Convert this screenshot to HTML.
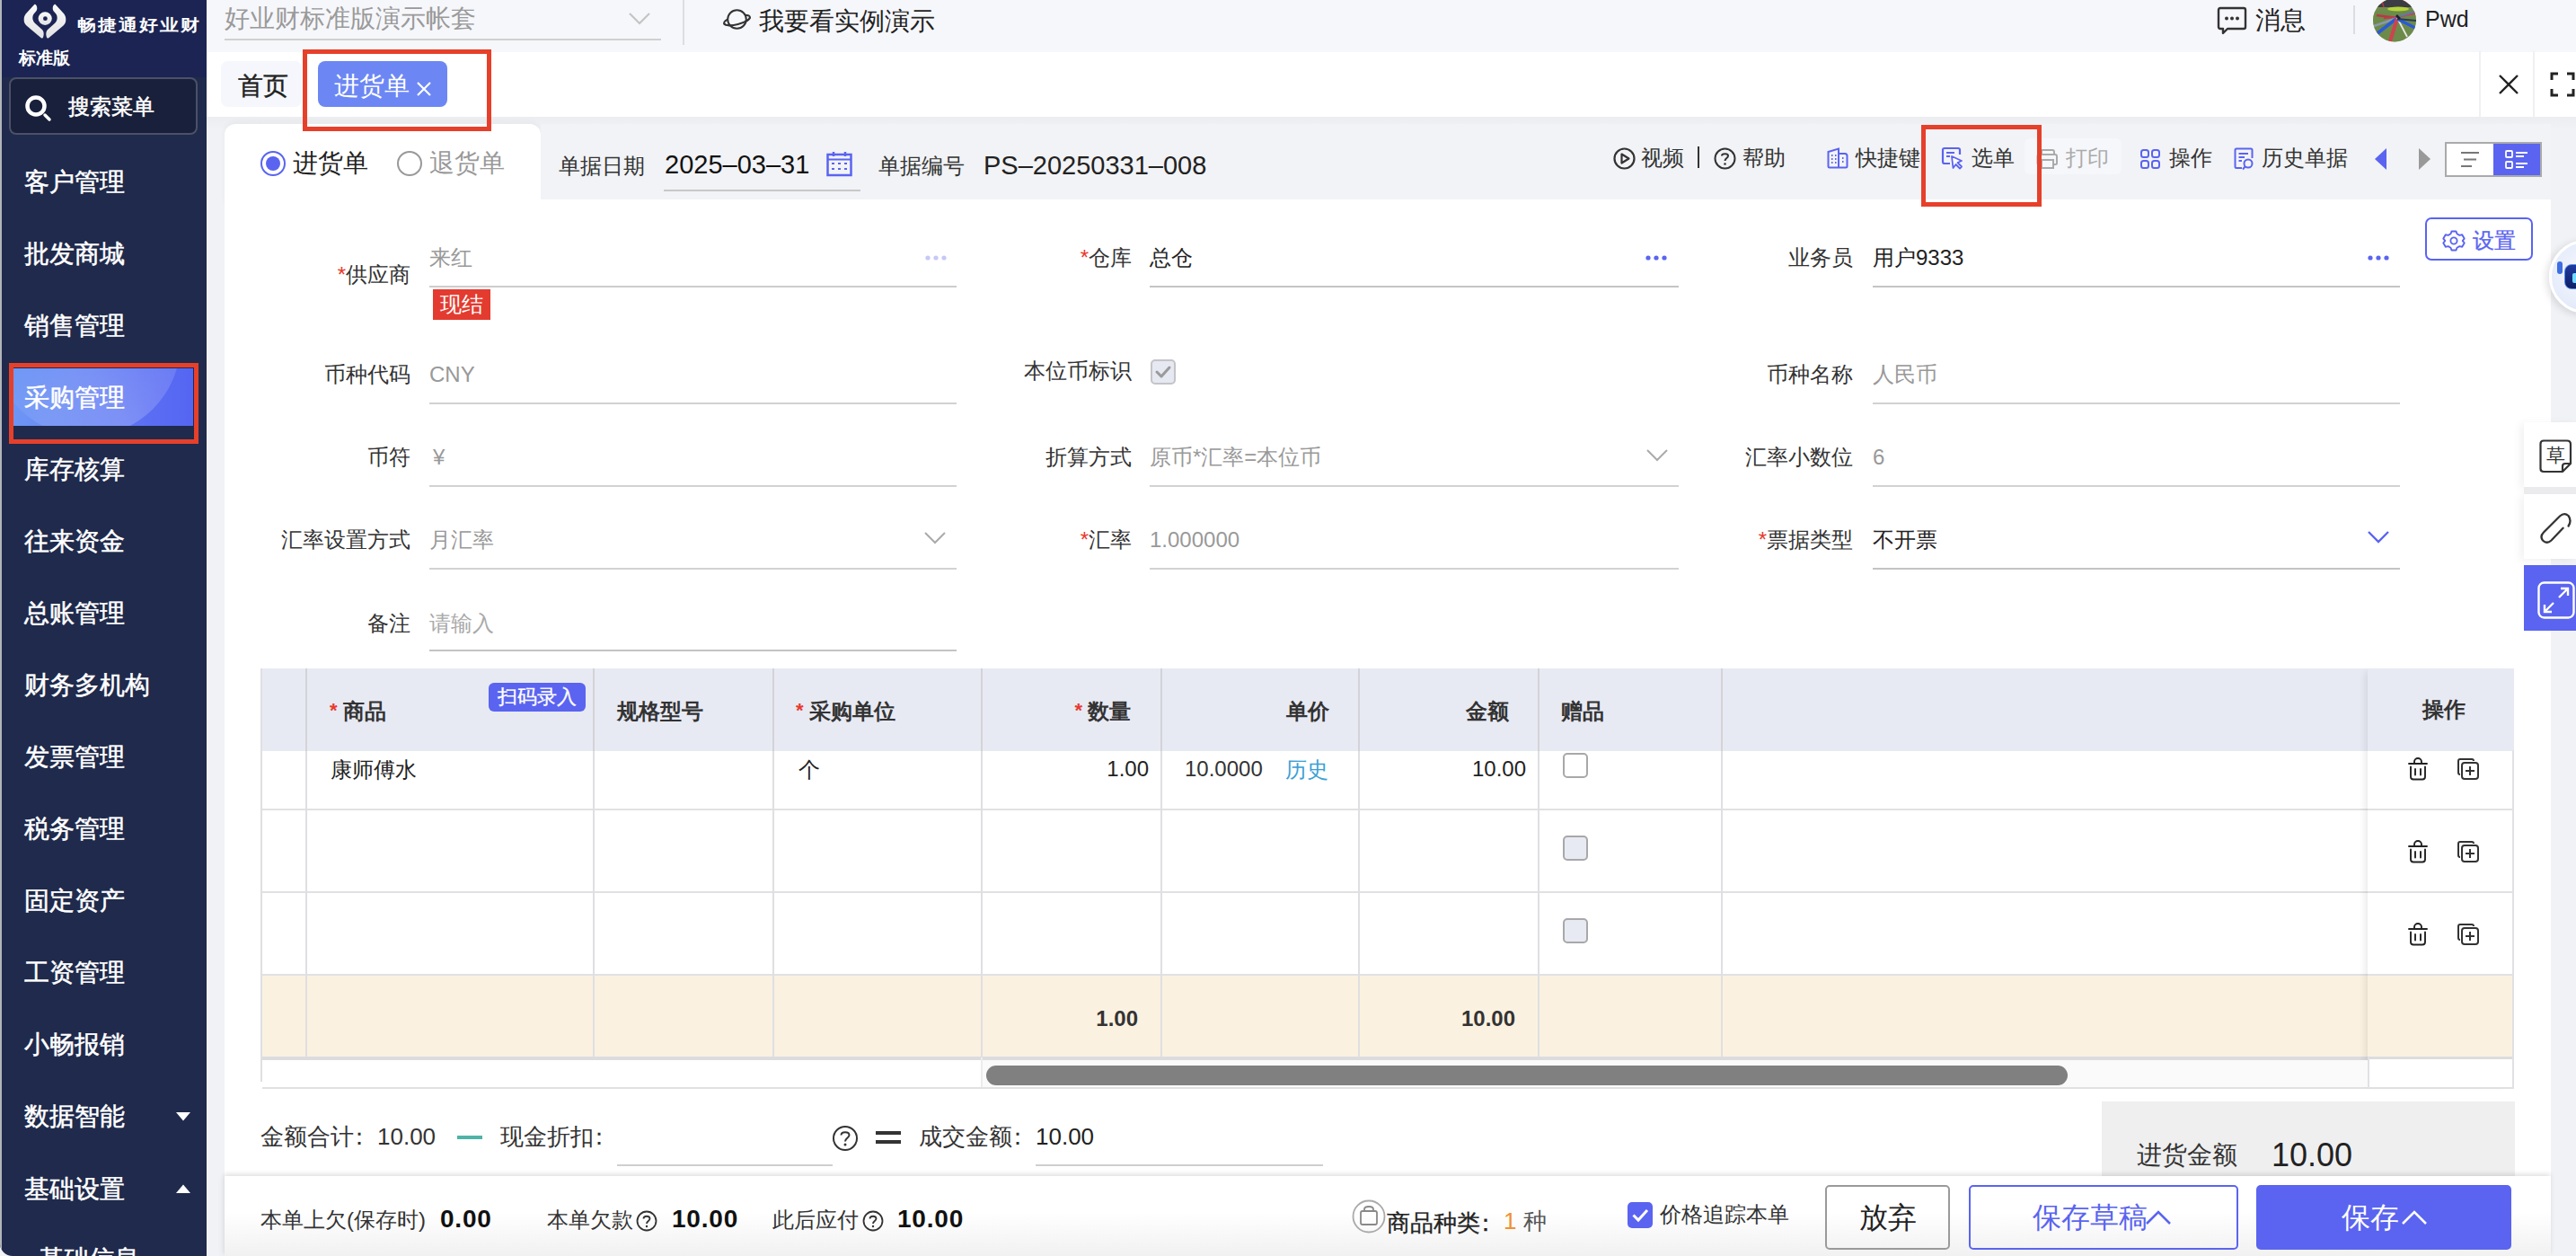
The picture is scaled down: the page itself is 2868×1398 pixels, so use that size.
<!DOCTYPE html>
<html><head><meta charset="utf-8">
<style>
*{box-sizing:border-box;margin:0;padding:0}
html,body{width:2868px;height:1398px;overflow:hidden;background:#f1f2f5;font-family:"Liberation Sans",sans-serif;color:#333}
.a{position:absolute;white-space:nowrap}
#side{position:absolute;left:0;top:0;width:230px;height:1398px;background:#1f2a4c;border-bottom-left-radius:14px;overflow:hidden}
#side .lb{position:absolute;left:0;top:0;width:2px;height:100%;background:#b4b5ba}
#side .logo{position:absolute;left:2px;top:0;width:228px;height:86px;background:#1b2453}
.mi{position:absolute;left:27px;font-size:27.5px;color:#fff;line-height:40px;-webkit-text-stroke:0.5px #fff}
.rb{position:absolute;border:5px solid #e6402b;z-index:20}
.med{-webkit-text-stroke:0.4px currentColor}
#hdr{position:absolute;left:230px;top:0;width:2638px;height:58px;background:#f6f7fb}
#tabs{position:absolute;left:230px;top:58px;width:2638px;height:72px;background:#fff}
.lbl{position:absolute;font-size:24px;color:#333;line-height:34px;text-align:right;white-space:nowrap}
.req{color:#e8392e}
.inp{position:absolute;height:2px;background:#d3d3d3}
.val{position:absolute;font-size:24px;line-height:34px;white-space:nowrap}
.gray{color:#999}
</style></head><body>

<!-- SIDEBAR -->
<div id="side">
  <div class="lb"></div>
  <div class="logo"></div>
  <svg class="a" style="left:20px;top:0px" width="60" height="50" viewBox="0 0 60 50">
    <defs><linearGradient id="lg" x1="0" y1="0" x2="0" y2="1"><stop offset="0" stop-color="#fafafa"/><stop offset="1" stop-color="#e2e2e4"/></linearGradient></defs>
    <path id="lp" d="M18.5 4.8 C19.5 4.5 21.5 6.5 21.3 9.5 C21.2 11.5 20 13 18.5 14.5 C16.5 16.5 16 19 16.5 21.5 C17 24 18.5 25.5 20.5 27.3 L27 33 C29 35 29 38.5 28.2 41 C27.8 42.5 26.8 43 25.8 42.3 L9.5 28.5 C7 26.3 6.6 24 6.7 21 C6.8 18 8 16 10 14 Z" fill="url(#lg)"/>
    <path d="M18.5 4.8 C19.5 4.5 21.5 6.5 21.3 9.5 C21.2 11.5 20 13 18.5 14.5 C16.5 16.5 16 19 16.5 21.5 C17 24 18.5 25.5 20.5 27.3 L27 33 C29 35 29 38.5 28.2 41 C27.8 42.5 26.8 43 25.8 42.3 L9.5 28.5 C7 26.3 6.6 24 6.7 21 C6.8 18 8 16 10 14 Z" fill="url(#lg)" transform="translate(60,0) scale(-1,1)"/>
    <ellipse cx="30.2" cy="20.6" rx="7.6" ry="7.3" fill="url(#lg)"/>
    <circle cx="30.4" cy="20.7" r="2.4" fill="#1b2453"/>
  </svg>
  <div class="a" style="left:86px;top:14px;font-size:21px;line-height:28px;color:#fff;font-weight:700;letter-spacing:2px;transform:scaleY(0.86);transform-origin:0 50%">畅捷通好业财</div>
  <div class="a" style="left:21px;top:52px;font-size:19px;line-height:26px;color:#fff;font-weight:700">标准版</div>
  <div class="a" style="left:10px;top:86px;width:210px;height:64px;background:#19203b;border:2px solid #4b5266;border-radius:8px"></div>
  <svg class="a" style="left:28px;top:106px" width="30" height="30" viewBox="0 0 30 30"><circle cx="12" cy="12" r="9.5" fill="none" stroke="#fff" stroke-width="4.5"/><path d="M22 22 L27 27" stroke="#fff" stroke-width="3.5" stroke-linecap="round"/></svg>
  <div class="a" style="left:76px;top:102px;font-size:24px;line-height:34px;color:#fff;-webkit-text-stroke:0.5px #fff">搜索菜单</div>
  <div class="mi" style="top:183px">客户管理</div>
  <div class="mi" style="top:263px">批发商城</div>
  <div class="mi" style="top:343px">销售管理</div>
  <div class="a" style="left:15px;top:410px;width:200px;height:64px;background:linear-gradient(90deg,#6d96f5 0%,#6480f4 45%,#5a6ef3 75%,#5565f2 100%);overflow:hidden"><div style="position:absolute;left:-24px;top:-134px;width:210px;height:210px;border-radius:50%;background:radial-gradient(circle at 72% 96%,rgba(255,255,255,0.2) 0%,rgba(255,255,255,0.12) 35%,rgba(255,255,255,0) 62%)"></div></div>
  <div class="mi" style="top:423px">采购管理</div>
  <div class="rb" style="left:10px;top:404px;width:211px;height:90px"></div>
  <div class="mi" style="top:503px">库存核算</div>
  <div class="mi" style="top:583px">往来资金</div>
  <div class="mi" style="top:663px">总账管理</div>
  <div class="mi" style="top:743px">财务多机构</div>
  <div class="mi" style="top:823px">发票管理</div>
  <div class="mi" style="top:903px">税务管理</div>
  <div class="mi" style="top:983px">固定资产</div>
  <div class="mi" style="top:1063px">工资管理</div>
  <div class="mi" style="top:1143px">小畅报销</div>
  <div class="mi" style="top:1223px">数据智能</div>
  <svg class="a" style="left:196px;top:1238px" width="16" height="10"><path d="M0 0 L16 0 L8 9.5Z" fill="#fff"/></svg>
  <div class="mi" style="top:1304px">基础设置</div>
  <svg class="a" style="left:196px;top:1318px" width="16" height="10"><path d="M0 10 L16 10 L8 0.5Z" fill="#fff"/></svg>
  <div class="mi" style="top:1382px;left:43px">基础信息</div>
</div>
</div>

<!-- HEADER -->
<div id="hdr"></div>
<div class="a" style="left:250px;top:2px;font-size:28px;line-height:38px;color:#9a9a9a">好业财标准版演示帐套</div>
<svg class="a" style="left:699px;top:13px" width="26" height="16"><path d="M2 2 L13 13 L24 2" fill="none" stroke="#c4c4c4" stroke-width="2.2"/></svg>
<div class="a" style="left:250px;top:43px;width:486px;height:2px;background:#d0d0d0"></div>
<div class="a" style="left:760px;top:0;width:2px;height:50px;background:#dcdde2"></div>
<svg class="a" style="left:803px;top:6px" width="36" height="30" viewBox="0 0 36 30"><defs><clipPath id="pfront"><rect x="-5" y="16.5" width="50" height="20" transform="rotate(-14 17.5 16.5)"/></clipPath></defs>
<ellipse cx="17.5" cy="16.5" rx="14.8" ry="4.6" transform="rotate(-14 17.5 16.5)" fill="none" stroke="#333" stroke-width="2"/>
<circle cx="17.5" cy="15.5" r="10.3" fill="#f6f7fb" stroke="#333" stroke-width="2"/>
<g clip-path="url(#pfront)"><ellipse cx="17.5" cy="16.5" rx="14.8" ry="4.6" transform="rotate(-14 17.5 16.5)" fill="none" stroke="#333" stroke-width="2"/></g></svg>
<div class="a" style="left:845px;top:5px;font-size:28px;line-height:38px;color:#222">我要看实例演示</div>
<svg class="a" style="left:2468px;top:6px" width="34" height="34" viewBox="0 0 34 34"><path d="M4 3 H30 Q32 3 32 5 V24 Q32 26 30 26 H12 L7 31 V26 H4 Q2 26 2 24 V5 Q2 3 4 3Z" fill="none" stroke="#333" stroke-width="2.4" stroke-linejoin="round"/><circle cx="11" cy="14.5" r="2" fill="#333"/><circle cx="17" cy="14.5" r="2" fill="#333"/><circle cx="23" cy="14.5" r="2" fill="#333"/></svg>
<div class="a" style="left:2511px;top:4px;font-size:28px;line-height:38px;color:#222">消息</div>
<div class="a" style="left:2620px;top:6px;width:2px;height:32px;background:#dcdde2"></div>
<svg class="a" style="left:2642px;top:0" width="48" height="47" viewBox="0 0 48 47"><defs><clipPath id="avc"><circle cx="24" cy="22.5" r="24"/></clipPath></defs><g clip-path="url(#avc)">
<rect x="0" y="0" width="48" height="47" fill="#6f8c4c"/>
<rect x="0" y="-2" width="48" height="10" fill="#3c3c44"/>
<path d="M10 1 L12 8 M34 0 L48 8" stroke="#b13a3a" stroke-width="1.5"/>
<ellipse cx="28" cy="10" rx="12" ry="2.5" fill="#b4d43a"/>
<path d="M0 14 L48 12 L48 47 L0 47Z" fill="#6b8848" opacity="0.6"/>
<path d="M27 20 L4 17" stroke="#b8394a" stroke-width="2.5"/>
<path d="M27 19 L12 20" stroke="#c03a4a" stroke-width="2"/>
<path d="M27 19 L47 15" stroke="#b84a5a" stroke-width="2"/>
<path d="M27 19 L46 13" stroke="#5a7ab8" stroke-width="1.5"/>
<path d="M27 20 L1 29" stroke="#8a9aaa" stroke-width="2.5"/>
<path d="M27 20 L5 37" stroke="#2a5ad8" stroke-width="3.5"/>
<path d="M27 20 L19 46" stroke="#d04050" stroke-width="4"/>
<path d="M27 20 L38 41" stroke="#e8e8e8" stroke-width="1.8"/>
<path d="M27 21 L47 31" stroke="#2a5ad8" stroke-width="3.5"/>
<path d="M27 21 L48 23" stroke="#2a3a5a" stroke-width="2"/>
<path d="M26 17 L30 21" stroke="#222" stroke-width="2.5"/>
</g></svg>
<div class="a" style="left:2700px;top:3px;font-size:25px;line-height:36px;color:#222">Pwd</div>
<div id="tabs"></div>
<div class="a" style="left:246px;top:68px;width:90px;height:51px;background:#f5f7fc;border-radius:8px"></div>
<div class="a" style="left:265px;top:77px;font-size:28px;line-height:38px;color:#222;-webkit-text-stroke:0.4px #222">首页</div>
<div class="a" style="left:354px;top:68px;width:144px;height:51px;background:#6c87f4;border-radius:8px"></div>
<div class="a" style="left:372px;top:77px;font-size:28px;line-height:38px;color:#fff">进货单</div>
<svg class="a" style="left:463px;top:90px" width="18" height="18"><path d="M2 2 L16 16 M16 2 L2 16" stroke="#fff" stroke-width="2.2"/></svg>
<div class="rb" style="left:337px;top:55px;width:210px;height:91px"></div>
<div class="a" style="left:2760px;top:57px;width:2px;height:73px;background:#f0f0f2"></div>
<div class="a" style="left:2820px;top:57px;width:2px;height:73px;background:#f0f0f2"></div>
<svg class="a" style="left:2781px;top:82px" width="24" height="24"><path d="M2 2 L22 22 M22 2 L2 22" stroke="#222" stroke-width="2.4"/></svg>
<svg class="a" style="left:2839px;top:80px" width="29" height="28"><path d="M2 9 V2 H9 M19 2 H26 V9 M26 19 V26 H19 M9 26 H2 V19" fill="none" stroke="#222" stroke-width="3"/></svg>

<!-- CARD -->
<div class="a" style="left:230px;top:130px;width:2638px;height:14px;background:linear-gradient(#ecedf0,#f1f2f5)"></div>
<div class="a" style="left:250px;top:138px;width:352px;height:90px;background:#fff;border-radius:12px 12px 0 0;box-shadow:0 -2px 6px rgba(0,0,0,0.04)"></div>
<div class="a" style="left:602px;top:138px;width:2238px;height:84px;background:#f2f3f6"></div>
<div class="a" style="left:250px;top:222px;width:2590px;height:1176px;background:#fff"></div>
<!-- toolbar -->
<div class="a" style="left:290px;top:168px;width:28px;height:28px;border:2px solid #5a64f0;border-radius:50%"><div style="position:absolute;left:4px;top:4px;width:16px;height:16px;border-radius:50%;background:#5a64f0"></div></div>
<div class="a" style="left:326px;top:162px;font-size:28px;line-height:40px;color:#222">进货单</div>
<div class="a" style="left:442px;top:168px;width:28px;height:28px;border:2px solid #999;border-radius:50%"></div>
<div class="a" style="left:478px;top:162px;font-size:28px;line-height:40px;color:#999">退货单</div>
<div class="a" style="left:622px;top:168px;font-size:24px;line-height:34px;color:#333">单据日期</div>
<div class="a" style="left:740px;top:162px;font-size:29px;line-height:42px;color:#111">2025–03–31</div>
<svg class="a" style="left:920px;top:168px" width="30" height="30" viewBox="0 0 30 30"><rect x="1.5" y="4" width="26" height="23" fill="none" stroke="#5a64f0" stroke-width="2.5"/><path d="M1.5 9.5 H27.5" stroke="#5a64f0" stroke-width="2"/><path d="M8 1 V6 M21 1 V6" stroke="#5a64f0" stroke-width="2.5"/><path d="M6 14 H9 M13 14 H16 M20 14 H23 M6 20 H9 M13 20 H16 M20 20 H23" stroke="#5a64f0" stroke-width="2"/></svg>
<div class="a" style="left:739px;top:211px;width:219px;height:2px;background:#c8c8c8"></div>
<div class="a" style="left:978px;top:168px;font-size:24px;line-height:34px;color:#333">单据编号</div>
<div class="a" style="left:1095px;top:163px;font-size:29px;line-height:42px;color:#222">PS–20250331–008</div>
<!-- toolbar right -->
<svg class="a" style="left:1796px;top:164px" width="25" height="25" viewBox="0 0 25 25"><circle cx="12.5" cy="12.5" r="11" fill="none" stroke="#333" stroke-width="2.2"/><path d="M9.5 7.5 L17.5 12.5 L9.5 17.5Z" fill="none" stroke="#333" stroke-width="2.2" stroke-linejoin="round"/></svg>
<div class="a" style="left:1827px;top:159px;font-size:24px;line-height:34px;color:#333">视频</div>
<div class="a" style="left:1890px;top:163px;width:2px;height:24px;background:#333"></div>
<svg class="a" style="left:1908px;top:164px" width="25" height="25" viewBox="0 0 25 25"><circle cx="12.5" cy="12.5" r="11" fill="none" stroke="#333" stroke-width="2"/><path d="M9 9.5 C9 6.5 16 6.5 16 9.5 C16 12 12.5 12 12.5 15" fill="none" stroke="#333" stroke-width="2"/><circle cx="12.5" cy="18.5" r="1.3" fill="#333"/></svg>
<div class="a" style="left:1940px;top:159px;font-size:24px;line-height:34px;color:#333">帮助</div>
<svg class="a" style="left:2034px;top:164px" width="24" height="24" viewBox="0 0 24 24"><path d="M1.5 5 L13 1.5 V22.5 H3 Q1.5 22.5 1.5 21Z M13 7 H20 Q22.5 7 22.5 9.5 V21 Q22.5 22.5 21 22.5 H13" fill="none" stroke="#5a64f0" stroke-width="2"/><path d="M5 9 H6.5 M9 9 H10.5 M5 13 H6.5 M9 13 H10.5 M5 17 H6.5 M9 17 H10.5 M17 12 H18.5 M17 16 H18.5" stroke="#5a64f0" stroke-width="2"/></svg>
<div class="a" style="left:2066px;top:159px;font-size:24px;line-height:34px;color:#333">快捷键</div>
<svg class="a" style="left:2161px;top:163px" width="26" height="26" viewBox="0 0 26 26"><path d="M10 19 H4 Q2 19 2 17 V4 Q2 2 4 2 H19 Q21 2 21 4 V9" fill="none" stroke="#5a64f0" stroke-width="2.2"/><path d="M6 7 H15 M6 11 H10" stroke="#5a64f0" stroke-width="2.2"/><path d="M12 11 L13.5 24 L16.5 20 L21 24.5 L23 22.5 L18.5 18 L23 16Z" fill="#fff" stroke="#5a64f0" stroke-width="1.8" stroke-linejoin="round"/></svg>
<div class="a" style="left:2195px;top:159px;font-size:24px;line-height:34px;color:#333">选单</div>
<div class="rb" style="left:2139px;top:139px;width:134px;height:91px"></div>
<div class="a" style="left:2254px;top:154px;width:108px;height:40px;background:#f6f7fb;border-radius:6px"></div>
<svg class="a" style="left:2267px;top:165px" width="26" height="24" viewBox="0 0 26 24"><path d="M6 7 V2 H18 Q20 2 20 4 V7" fill="none" stroke="#aaa" stroke-width="2"/><path d="M6 18 H3 Q1.5 18 1.5 16.5 V9 Q1.5 7 3.5 7 H21 Q23 7 23 9 V16.5 Q23 18 21.5 18 H19" fill="none" stroke="#aaa" stroke-width="2"/><rect x="6" y="13" width="13" height="9" fill="none" stroke="#aaa" stroke-width="2"/></svg>
<div class="a" style="left:2300px;top:159px;font-size:24px;line-height:34px;color:#aaa">打印</div>
<svg class="a" style="left:2383px;top:166px" width="22" height="22" viewBox="0 0 22 22"><rect x="1" y="1" width="8" height="8" rx="2.5" fill="none" stroke="#5a64f0" stroke-width="2"/><rect x="13" y="1" width="8" height="8" rx="2.5" fill="none" stroke="#5a64f0" stroke-width="2"/><rect x="1" y="13" width="8" height="8" rx="2.5" fill="none" stroke="#5a64f0" stroke-width="2"/><rect x="13" y="13" width="8" height="8" rx="2.5" fill="none" stroke="#5a64f0" stroke-width="2"/></svg>
<div class="a" style="left:2415px;top:159px;font-size:24px;line-height:34px;color:#333">操作</div>
<svg class="a" style="left:2487px;top:164px" width="24" height="26" viewBox="0 0 24 26"><path d="M9 23 H3 Q1.5 23 1.5 21.5 V3 Q1.5 1.5 3 1.5 H19 Q20.5 1.5 20.5 3 V12" fill="none" stroke="#5a64f0" stroke-width="2"/><path d="M5.5 7 H16 M5.5 11 H12 M5.5 15 H9" stroke="#5a64f0" stroke-width="2"/><circle cx="16" cy="18" r="4.5" fill="none" stroke="#5a64f0" stroke-width="2"/><path d="M12.5 21.5 L10 24.5" stroke="#5a64f0" stroke-width="2"/></svg>
<div class="a" style="left:2518px;top:159px;font-size:24px;line-height:34px;color:#333">历史单据</div>
<svg class="a" style="left:2644px;top:165px" width="14" height="24"><path d="M13 0 V24 L0 12Z" fill="#5a64f0"/></svg>
<svg class="a" style="left:2692px;top:165px" width="14" height="24"><path d="M1 0 V24 L14 12Z" fill="#999"/></svg>
<div class="a" style="left:2722px;top:158px;width:108px;height:39px;border:2px solid #aaa;background:#fff"></div>
<div class="a" style="left:2776px;top:160px;width:52px;height:35px;background:#5a64f0"></div>
<svg class="a" style="left:2738px;top:168px" width="24" height="20"><path d="M2 2 H22 M5 9.5 H19 M2 17 H14" stroke="#777" stroke-width="1.8"/></svg>
<svg class="a" style="left:2789px;top:167px" width="26" height="22" viewBox="0 0 26 22"><rect x="1" y="1" width="7" height="7" rx="1" fill="none" stroke="#fff" stroke-width="1.8"/><rect x="1" y="13" width="7" height="7" rx="1" fill="none" stroke="#fff" stroke-width="1.8"/><path d="M12 3 H25 M12 7 H21 M12 15 H25 M12 19 H21" stroke="#fff" stroke-width="1.8"/></svg>
<!-- settings -->
<div class="a" style="left:2700px;top:242px;width:120px;height:48px;border:2px solid #5a64f0;border-radius:7px"></div>
<svg class="a" style="left:2719px;top:256px" width="26" height="24" viewBox="0 0 26 24"><path d="M10.5 1.5 H15.5 L16.5 4.3 L19.3 5.9 L22.2 5.3 L24.7 9.6 L22.8 11.9 V12.1 L24.7 14.4 L22.2 18.7 L19.3 18.1 L16.5 19.7 L15.5 22.5 H10.5 L9.5 19.7 L6.7 18.1 L3.8 18.7 L1.3 14.4 L3.2 12.1 V11.9 L1.3 9.6 L3.8 5.3 L6.7 5.9 L9.5 4.3Z" fill="none" stroke="#5a64f0" stroke-width="1.9" stroke-linejoin="round"/><circle cx="13" cy="12" r="3.6" fill="none" stroke="#5a64f0" stroke-width="1.9"/></svg>
<div class="a" style="left:2753px;top:251px;font-size:24px;line-height:34px;color:#5a64f0;-webkit-text-stroke:0.3px #5a64f0">设置</div>
<!-- form -->
<div class="lbl" style="right:2411px;top:289px"><span class="req">*</span>供应商</div>
<div class="val" style="left:478px;top:270px;color:#999">来红</div>
<div class="inp" style="left:478px;top:318px;width:587px;background:#cdcdcd"></div>
<svg class="a" style="left:1030px;top:283px" width="24" height="8"><circle cx="3" cy="4" r="2.6" fill="#c6c9f6"/><circle cx="12" cy="4" r="2.6" fill="#c6c9f6"/><circle cx="21" cy="4" r="2.6" fill="#c6c9f6"/></svg>
<div class="a" style="left:482px;top:322px;width:64px;height:34px;background:#e33b2f;color:#fff;font-size:24px;line-height:34px;text-align:center">现结</div>
<div class="lbl" style="right:1608px;top:270px"><span class="req">*</span>仓库</div>
<div class="val" style="left:1280px;top:270px;color:#222">总仓</div>
<div class="inp" style="left:1280px;top:318px;width:589px;background:#c4c4c4"></div>
<svg class="a" style="left:1832px;top:283px" width="24" height="8"><circle cx="3" cy="4" r="2.6" fill="#5a64f0"/><circle cx="12" cy="4" r="2.6" fill="#5a64f0"/><circle cx="21" cy="4" r="2.6" fill="#5a64f0"/></svg>
<div class="lbl" style="right:805px;top:270px">业务员</div>
<div class="val" style="left:2085px;top:270px;color:#222">用户9333</div>
<div class="inp" style="left:2085px;top:318px;width:587px;background:#c4c4c4"></div>
<svg class="a" style="left:2636px;top:283px" width="24" height="8"><circle cx="3" cy="4" r="2.6" fill="#5a64f0"/><circle cx="12" cy="4" r="2.6" fill="#5a64f0"/><circle cx="21" cy="4" r="2.6" fill="#5a64f0"/></svg>
<div class="lbl" style="right:2411px;top:400px">币种代码</div>
<div class="val" style="left:478px;top:400px;color:#999">CNY</div>
<div class="inp" style="left:478px;top:448px;width:587px;background:#d2d2d2"></div>
<div class="lbl" style="right:1608px;top:396px">本位币标识</div>
<div class="a" style="left:1281px;top:400px;width:28px;height:28px;background:#e6e8f2;border:2px solid #c4c4c8;border-radius:5px"></div><svg class="a" style="left:1281px;top:400px" width="28" height="28"><path d="M7 14 L12 19 L21 9" fill="none" stroke="#9a9a9a" stroke-width="3" stroke-linecap="round" stroke-linejoin="round"/></svg>
<div class="lbl" style="right:805px;top:400px">币种名称</div>
<div class="val" style="left:2085px;top:400px;color:#999">人民币</div>
<div class="inp" style="left:2085px;top:448px;width:587px;background:#d2d2d2"></div>
<div class="lbl" style="right:2411px;top:492px">币符</div>
<div class="val" style="left:482px;top:492px;color:#999">¥</div>
<div class="inp" style="left:478px;top:540px;width:587px;background:#d2d2d2"></div>
<div class="lbl" style="right:1608px;top:492px">折算方式</div>
<div class="val" style="left:1280px;top:492px;color:#999">原币*汇率=本位币</div>
<div class="inp" style="left:1280px;top:540px;width:589px;background:#d2d2d2"></div>
<svg class="a" style="left:1832px;top:499px" width="26" height="16"><path d="M2 2 L13 13 L24 2" fill="none" stroke="#aaa" stroke-width="2"/></svg>
<div class="lbl" style="right:805px;top:492px">汇率小数位</div>
<div class="val" style="left:2085px;top:492px;color:#999">6</div>
<div class="inp" style="left:2085px;top:540px;width:587px;background:#d2d2d2"></div>
<div class="lbl" style="right:2411px;top:584px">汇率设置方式</div>
<div class="val" style="left:478px;top:584px;color:#999">月汇率</div>
<div class="inp" style="left:478px;top:632px;width:587px;background:#d2d2d2"></div>
<svg class="a" style="left:1028px;top:591px" width="26" height="16"><path d="M2 2 L13 13 L24 2" fill="none" stroke="#aaa" stroke-width="2"/></svg>
<div class="lbl" style="right:1608px;top:584px"><span class="req">*</span>汇率</div>
<div class="val" style="left:1280px;top:584px;color:#999">1.000000</div>
<div class="inp" style="left:1280px;top:632px;width:589px;background:#d2d2d2"></div>
<div class="lbl" style="right:805px;top:584px"><span class="req">*</span>票据类型</div>
<div class="val" style="left:2085px;top:584px;color:#222">不开票</div>
<div class="inp" style="left:2085px;top:632px;width:587px;background:#c4c4c4"></div>
<svg class="a" style="left:2635px;top:590px" width="26" height="16"><path d="M2 2 L13 13 L24 2" fill="none" stroke="#5a64f0" stroke-width="2.4"/></svg>
<div class="lbl" style="right:2411px;top:677px">备注</div>
<div class="val" style="left:478px;top:677px;color:#aaa">请输入</div>
<div class="inp" style="left:478px;top:723px;width:587px;background:#c4c4c4"></div>
<!-- table -->
<div class="a" style="left:290px;top:744px;width:2509px;height:92px;background:#e8eaf3"></div>
<div class="a" style="left:290px;top:1084px;width:2509px;height:92px;background:#fbf1e0"></div>
<div class="a" style="left:290px;top:900px;width:2509px;height:2px;background:#e1e1e4"></div>
<div class="a" style="left:290px;top:992px;width:2509px;height:2px;background:#e1e1e4"></div>
<div class="a" style="left:290px;top:1084px;width:2509px;height:2px;background:#e1e1e4"></div>
<div class="a" style="left:290px;top:1176px;width:2509px;height:2px;background:#e1e1e4"></div>
<div class="a" style="left:290px;top:1176px;width:2509px;height:4px;background:#dcdcdf"></div>
<div class="a" style="left:292px;top:1210px;width:2507px;height:2px;background:#e1e1e4"></div>
<div class="a" style="left:290px;top:744px;width:2px;height:433px;background:#dfdfe3"></div>
<div class="a" style="left:340px;top:744px;width:2px;height:433px;background:#dfdfe3"></div>
<div class="a" style="left:660px;top:744px;width:2px;height:433px;background:#dfdfe3"></div>
<div class="a" style="left:860px;top:744px;width:2px;height:433px;background:#dfdfe3"></div>
<div class="a" style="left:1092px;top:744px;width:2px;height:433px;background:#dfdfe3"></div>
<div class="a" style="left:1292px;top:744px;width:2px;height:433px;background:#dfdfe3"></div>
<div class="a" style="left:1512px;top:744px;width:2px;height:433px;background:#dfdfe3"></div>
<div class="a" style="left:1712px;top:744px;width:2px;height:433px;background:#dfdfe3"></div>
<div class="a" style="left:1916px;top:744px;width:2px;height:433px;background:#dfdfe3"></div>
<div class="a" style="left:290px;top:1177px;width:2px;height:27px;background:#dfdfe3"></div>
<div class="a" style="left:1092px;top:1177px;width:2px;height:33px;background:#ececee"></div>
<div class="a" style="left:340px;top:744px;width:2px;height:92px;background:#d3d3d8"></div><div class="a" style="left:660px;top:744px;width:2px;height:92px;background:#d3d3d8"></div><div class="a" style="left:860px;top:744px;width:2px;height:92px;background:#d3d3d8"></div><div class="a" style="left:1092px;top:744px;width:2px;height:92px;background:#d3d3d8"></div><div class="a" style="left:1292px;top:744px;width:2px;height:92px;background:#d3d3d8"></div><div class="a" style="left:1512px;top:744px;width:2px;height:92px;background:#d3d3d8"></div><div class="a" style="left:1712px;top:744px;width:2px;height:92px;background:#d3d3d8"></div><div class="a" style="left:1916px;top:744px;width:2px;height:92px;background:#d3d3d8"></div>
<div class="a" style="left:2636px;top:744px;width:163px;height:467px;box-shadow:-6px 0 8px -4px rgba(0,0,0,0.10)"></div>
<div class="a" style="left:2636px;top:744px;width:163px;height:92px;background:#e8eaf3"></div>
<div class="a" style="left:2636px;top:836px;width:163px;height:248px;background:#fff"></div>
<div class="a" style="left:2636px;top:1084px;width:163px;height:92px;background:#fbf1e0"></div>
<div class="a" style="left:2636px;top:1179px;width:163px;height:30px;background:#fff"></div>
<div class="a" style="left:2636px;top:900px;width:163px;height:2px;background:#e1e1e4"></div>
<div class="a" style="left:2636px;top:992px;width:163px;height:2px;background:#e1e1e4"></div>
<div class="a" style="left:2636px;top:1084px;width:163px;height:2px;background:#e1e1e4"></div>
<div class="a" style="left:2797px;top:835px;width:2px;height:376px;background:#e1e1e4"></div>
<div class="a" style="left:2636px;top:1177px;width:2px;height:34px;background:#e1e1e4"></div>
<div class="a" style="left:1094px;top:1180px;width:1542px;height:30px;background:#fafafa"></div>
<div class="a" style="left:1098px;top:1186px;width:1204px;height:22px;background:#808080;border-radius:11px"></div>
<div class="a" style="left:367px;top:775px;font-size:24px;line-height:34px;font-weight:700;color:#333"><span class="req" style="font-size:22px;position:relative;top:-2px;margin-right:6px">*</span>商品</div>
<div class="a" style="left:544px;top:760px;width:108px;height:32px;background:#5a64f0;border-radius:6px;color:#fff;font-size:22px;line-height:32px;text-align:center;-webkit-text-stroke:0.3px #fff">扫码录入</div>
<div class="a" style="left:687px;top:775px;font-size:24px;line-height:34px;font-weight:700;color:#333">规格型号</div>
<div class="a" style="left:886px;top:775px;font-size:24px;line-height:34px;font-weight:700;color:#333"><span class="req" style="font-size:22px;position:relative;top:-2px;margin-right:6px">*</span>采购单位</div>
<div class="a" style="right:1609px;top:775px;font-size:24px;line-height:34px;font-weight:700;color:#333"><span class="req" style="font-size:22px;position:relative;top:-2px;margin-right:6px">*</span>数量</div>
<div class="a" style="right:1388px;top:775px;font-size:24px;line-height:34px;font-weight:700;color:#333">单价</div>
<div class="a" style="right:1188px;top:775px;font-size:24px;line-height:34px;font-weight:700;color:#333">金额</div>
<div class="a" style="left:1738px;top:775px;font-size:24px;line-height:34px;font-weight:700;color:#333">赠品</div>
<div class="a" style="left:2697px;top:773px;font-size:24px;line-height:34px;font-weight:700;color:#333">操作</div>
<div class="a" style="left:368px;top:840px;font-size:24px;line-height:34px;color:#222">康师傅水</div>
<div class="a" style="left:889px;top:840px;font-size:24px;line-height:34px;color:#222">个</div>
<div class="a" style="right:1589px;top:839px;font-size:24px;line-height:34px;color:#222">1.00</div>
<div class="a" style="left:1319px;top:839px;font-size:24px;line-height:34px;color:#333">10.0000</div>
<div class="a" style="left:1431px;top:840px;font-size:24px;line-height:34px;color:#3aa0d5">历史</div>
<div class="a" style="right:1169px;top:839px;font-size:24px;line-height:34px;color:#222">10.00</div>
<div class="a" style="left:1740px;top:838px;width:28px;height:28px;border:2px solid #a8a8a8;border-radius:5px;background:#fff"></div>
<div class="a" style="left:1740px;top:930px;width:28px;height:28px;border:2px solid #a8a8a8;border-radius:5px;background:#e8eaf3"></div>
<div class="a" style="left:1740px;top:1022px;width:28px;height:28px;border:2px solid #a8a8a8;border-radius:5px;background:#e8eaf3"></div>
<svg class="a" style="left:2680px;top:842px" width="24" height="28" viewBox="0 0 24 28"><path d="M2 8 H22 M8 8 V6 A4 4 0 0 1 16 6 V8 M4 11.5 V22.5 Q4 25.5 7 25.5 H17 Q20 25.5 20 22.5 V11.5 M9 14 V20.5 M15 14 V20.5" fill="none" stroke="#222" stroke-width="1.9" stroke-linecap="round"/></svg>
<svg class="a" style="left:2735px;top:843px" width="26" height="26" viewBox="0 0 26 26"><path d="M4 19 Q2 19 2 17 V4 Q2 2 4 2 H17 Q19 2 19 4" fill="none" stroke="#333" stroke-width="2"/><rect x="6" y="6" width="18" height="18" rx="3" fill="#fff" stroke="#333" stroke-width="2"/><path d="M15 10 V20 M10 15 H20" stroke="#333" stroke-width="2"/></svg>
<svg class="a" style="left:2680px;top:934px" width="24" height="28" viewBox="0 0 24 28"><path d="M2 8 H22 M8 8 V6 A4 4 0 0 1 16 6 V8 M4 11.5 V22.5 Q4 25.5 7 25.5 H17 Q20 25.5 20 22.5 V11.5 M9 14 V20.5 M15 14 V20.5" fill="none" stroke="#222" stroke-width="1.9" stroke-linecap="round"/></svg>
<svg class="a" style="left:2735px;top:935px" width="26" height="26" viewBox="0 0 26 26"><path d="M4 19 Q2 19 2 17 V4 Q2 2 4 2 H17 Q19 2 19 4" fill="none" stroke="#333" stroke-width="2"/><rect x="6" y="6" width="18" height="18" rx="3" fill="#fff" stroke="#333" stroke-width="2"/><path d="M15 10 V20 M10 15 H20" stroke="#333" stroke-width="2"/></svg>
<svg class="a" style="left:2680px;top:1026px" width="24" height="28" viewBox="0 0 24 28"><path d="M2 8 H22 M8 8 V6 A4 4 0 0 1 16 6 V8 M4 11.5 V22.5 Q4 25.5 7 25.5 H17 Q20 25.5 20 22.5 V11.5 M9 14 V20.5 M15 14 V20.5" fill="none" stroke="#222" stroke-width="1.9" stroke-linecap="round"/></svg>
<svg class="a" style="left:2735px;top:1027px" width="26" height="26" viewBox="0 0 26 26"><path d="M4 19 Q2 19 2 17 V4 Q2 2 4 2 H17 Q19 2 19 4" fill="none" stroke="#333" stroke-width="2"/><rect x="6" y="6" width="18" height="18" rx="3" fill="#fff" stroke="#333" stroke-width="2"/><path d="M15 10 V20 M10 15 H20" stroke="#333" stroke-width="2"/></svg>
<div class="a" style="right:1601px;top:1117px;font-size:24px;line-height:34px;font-weight:700;color:#333">1.00</div>
<div class="a" style="right:1181px;top:1117px;font-size:24px;line-height:34px;font-weight:700;color:#333">10.00</div>
<!-- bottom -->
<div class="a" style="left:2840px;top:222px;width:28px;height:1176px;background:#f1f2f5"></div>
<div class="a" style="left:2838px;top:267px;width:82px;height:82px;border-radius:50%;background:radial-gradient(circle at 45% 45%,#f4f7fe 0%,#e6ecfa 60%,#d5def4 100%);border:3px solid #fff;box-shadow:-3px 2px 8px rgba(0,0,0,0.12)"></div>
<div class="a" style="left:2847px;top:291px;width:6px;height:14px;border-radius:3px;background:#3d6fe0"></div>
<div class="a" style="left:2855px;top:294px;width:30px;height:28px;border-radius:8px;background:linear-gradient(#1f3aa0,#0e1f66);border:1px solid #5a8ae8"></div>
<div class="a" style="left:2864px;top:304px;width:6px;height:11px;border-radius:2px;background:#6fd8ff"></div>
<div class="a" style="left:2810px;top:470px;width:58px;height:72px;background:#fff;box-shadow:-4px 2px 10px rgba(0,0,0,0.06)"></div>
<div class="a" style="left:2810px;top:550px;width:58px;height:72px;background:#fff;box-shadow:-4px 2px 10px rgba(0,0,0,0.06)"></div>
<div class="a" style="left:2810px;top:542px;width:58px;height:8px;background:#ebebee"></div>
<div class="a" style="left:2810px;top:629px;width:58px;height:73px;background:#5a64f0"></div>
<svg class="a" style="left:2827px;top:489px" width="38" height="38" viewBox="0 0 38 38"><path d="M5 1.5 H31 Q35 1.5 35 5.5 V27 L26 36 H5 Q1.5 36 1.5 32.5 V5 Q1.5 1.5 5 1.5Z" fill="none" stroke="#333" stroke-width="2.2" stroke-linejoin="round"/><path d="M26 36 V30 Q26 27 29 27 H35" fill="none" stroke="#333" stroke-width="2.2"/><text x="18" y="25" font-size="21" text-anchor="middle" fill="#333" font-family="Liberation Sans">草</text></svg>
<svg class="a" style="left:2826px;top:568px" width="40" height="40" viewBox="0 0 40 40"><path d="M33.6 17.5 Q37.5 11.5 33.5 6 Q29 2 24 6.5 L6 24.5 Q1.5 29 5 33.5 Q9.5 38 14.5 33.5 L27.6 19.8" fill="none" stroke="#333" stroke-width="2.3" stroke-linecap="round"/></svg>
<svg class="a" style="left:2825px;top:647px" width="43" height="42" viewBox="0 0 43 42"><rect x="1.5" y="1.5" width="39" height="39" rx="6" fill="none" stroke="#fff" stroke-width="2.4"/><path d="M24 18 L34 8 M26 8 H34 V16 M18 24 L8 34 M8 26 V34 H16" fill="none" stroke="#fff" stroke-width="2.4"/></svg>
<div class="a" style="left:290px;top:1247px;font-size:26px;line-height:36px;color:#333">金额合计<span style="position:relative;left:-7px">：</span>10.00</div>
<div class="a" style="left:509px;top:1264px;width:28px;height:4px;background:#4fb3a8"></div>
<div class="a" style="left:557px;top:1247px;font-size:26px;line-height:36px;color:#333">现金折扣<span style="position:relative;left:-7px">：</span></div>
<div class="a" style="left:687px;top:1296px;width:240px;height:2px;background:#cfcfcf"></div>
<svg class="a" style="left:926px;top:1252px" width="30" height="30" viewBox="0 0 30 30"><circle cx="15" cy="15" r="13" fill="none" stroke="#333" stroke-width="2"/><path d="M10.5 11.5 C10.5 7 19.5 7 19.5 11.5 C19.5 14.5 15 14.5 15 18.5" fill="none" stroke="#333" stroke-width="2"/><circle cx="15" cy="22" r="1.5" fill="#333"/></svg>
<div class="a" style="left:975px;top:1259px;width:28px;height:4px;background:#333"></div><div class="a" style="left:975px;top:1269px;width:28px;height:4px;background:#333"></div>
<div class="a" style="left:1023px;top:1247px;font-size:26px;line-height:36px;color:#333">成交金额<span style="position:relative;left:-7px">：</span></div>
<div class="a" style="left:1153px;top:1247px;font-size:26px;line-height:36px;color:#222">10.00</div>
<div class="a" style="left:1153px;top:1296px;width:320px;height:2px;background:#cfcfcf"></div>
<div class="a" style="left:2340px;top:1226px;width:460px;height:90px;background:#efeff0"></div>
<div class="a" style="left:2379px;top:1267px;font-size:28px;line-height:38px;color:#333">进货金额</div>
<div class="a" style="left:2529px;top:1263px;font-size:36px;line-height:46px;color:#222">10.00</div>
<div class="a" style="left:250px;top:1309px;width:2590px;height:89px;background:linear-gradient(#fff 45%,#f1f1f2 100%);box-shadow:0 -3px 5px rgba(0,0,0,0.09),-3px 0 6px rgba(0,0,0,0.04)"></div>
<div class="a" style="left:290px;top:1341px;font-size:24px;line-height:34px;color:#333">本单上欠(保存时)</div>
<div class="a" style="left:490px;top:1338px;font-size:28px;line-height:38px;color:#111;font-weight:700;letter-spacing:0.8px">0.00</div>
<div class="a" style="left:609px;top:1341px;font-size:24px;line-height:34px;color:#333">本单欠款</div>
<svg class="a" style="left:708px;top:1347px" width="24" height="24" viewBox="0 0 24 24"><circle cx="12" cy="12" r="10.5" fill="none" stroke="#333" stroke-width="1.8"/><path d="M8.5 9.5 C8.5 5.8 15.5 5.8 15.5 9.5 C15.5 12 12 12 12 15" fill="none" stroke="#333" stroke-width="1.8"/><circle cx="12" cy="18" r="1.2" fill="#333"/></svg>
<div class="a" style="left:748px;top:1338px;font-size:28px;line-height:38px;color:#111;font-weight:700;letter-spacing:0.8px">10.00</div>
<div class="a" style="left:860px;top:1341px;font-size:24px;line-height:34px;color:#333">此后应付</div>
<svg class="a" style="left:960px;top:1347px" width="24" height="24" viewBox="0 0 24 24"><circle cx="12" cy="12" r="10.5" fill="none" stroke="#333" stroke-width="1.8"/><path d="M8.5 9.5 C8.5 5.8 15.5 5.8 15.5 9.5 C15.5 12 12 12 12 15" fill="none" stroke="#333" stroke-width="1.8"/><circle cx="12" cy="18" r="1.2" fill="#333"/></svg>
<div class="a" style="left:999px;top:1338px;font-size:28px;line-height:38px;color:#111;font-weight:700;letter-spacing:0.8px">10.00</div>
<svg class="a" style="left:1505px;top:1335px" width="38" height="38" viewBox="0 0 38 38"><circle cx="19" cy="19" r="17.5" fill="none" stroke="#aaa" stroke-width="1.8"/><rect x="10" y="13" width="18" height="15" rx="2" fill="none" stroke="#888" stroke-width="1.8"/><path d="M14 13 V11 Q14 8 19 8 Q24 8 24 11 V13" fill="none" stroke="#888" stroke-width="1.8"/></svg>
<div class="a" style="left:1544px;top:1343px;font-size:26px;line-height:36px;color:#222;-webkit-text-stroke:0.3px #222">商品种类<span style="position:relative;left:-7px">：</span></div>
<div class="a" style="left:1674px;top:1341px;font-size:26px;line-height:36px;color:#f0902f">1</div>
<div class="a" style="left:1696px;top:1341px;font-size:26px;line-height:36px;color:#555">种</div>
<div class="a" style="left:1812px;top:1338px;width:28px;height:29px;background:#5a64f0;border-radius:5px"></div><svg class="a" style="left:1812px;top:1338px" width="28" height="29"><path d="M6.5 14.5 L12 20 L22 9" fill="none" stroke="#fff" stroke-width="3"/></svg>
<div class="a" style="left:1848px;top:1335px;font-size:24px;line-height:34px;color:#333">价格追踪本单</div>
<div class="a" style="left:2032px;top:1319px;width:139px;height:72px;border:2px solid #9a9a9a;border-radius:5px;font-size:32px;line-height:68px;text-align:center;color:#222">放弃</div>
<div class="a" style="left:2192px;top:1319px;width:300px;height:72px;border:2px solid #5a64f0;border-radius:5px;font-size:32px;line-height:68px;text-align:center;color:#5a64f0">保存草稿<span style="display:inline-block;width:30px"></span></div>
<svg class="a" style="left:2388px;top:1346px" width="30" height="18"><path d="M2 16 L15 3 L28 16" fill="none" stroke="#5a64f0" stroke-width="2.6"/></svg>
<div class="a" style="left:2512px;top:1319px;width:284px;height:72px;background:#5a64f0;border-radius:5px;font-size:32px;line-height:72px;text-align:center;color:#fff">保存<span style="display:inline-block;width:30px"></span></div>
<svg class="a" style="left:2673px;top:1346px" width="30" height="18"><path d="M2 16 L15 3 L28 16" fill="none" stroke="#fff" stroke-width="2.6"/></svg>
</body></html>
